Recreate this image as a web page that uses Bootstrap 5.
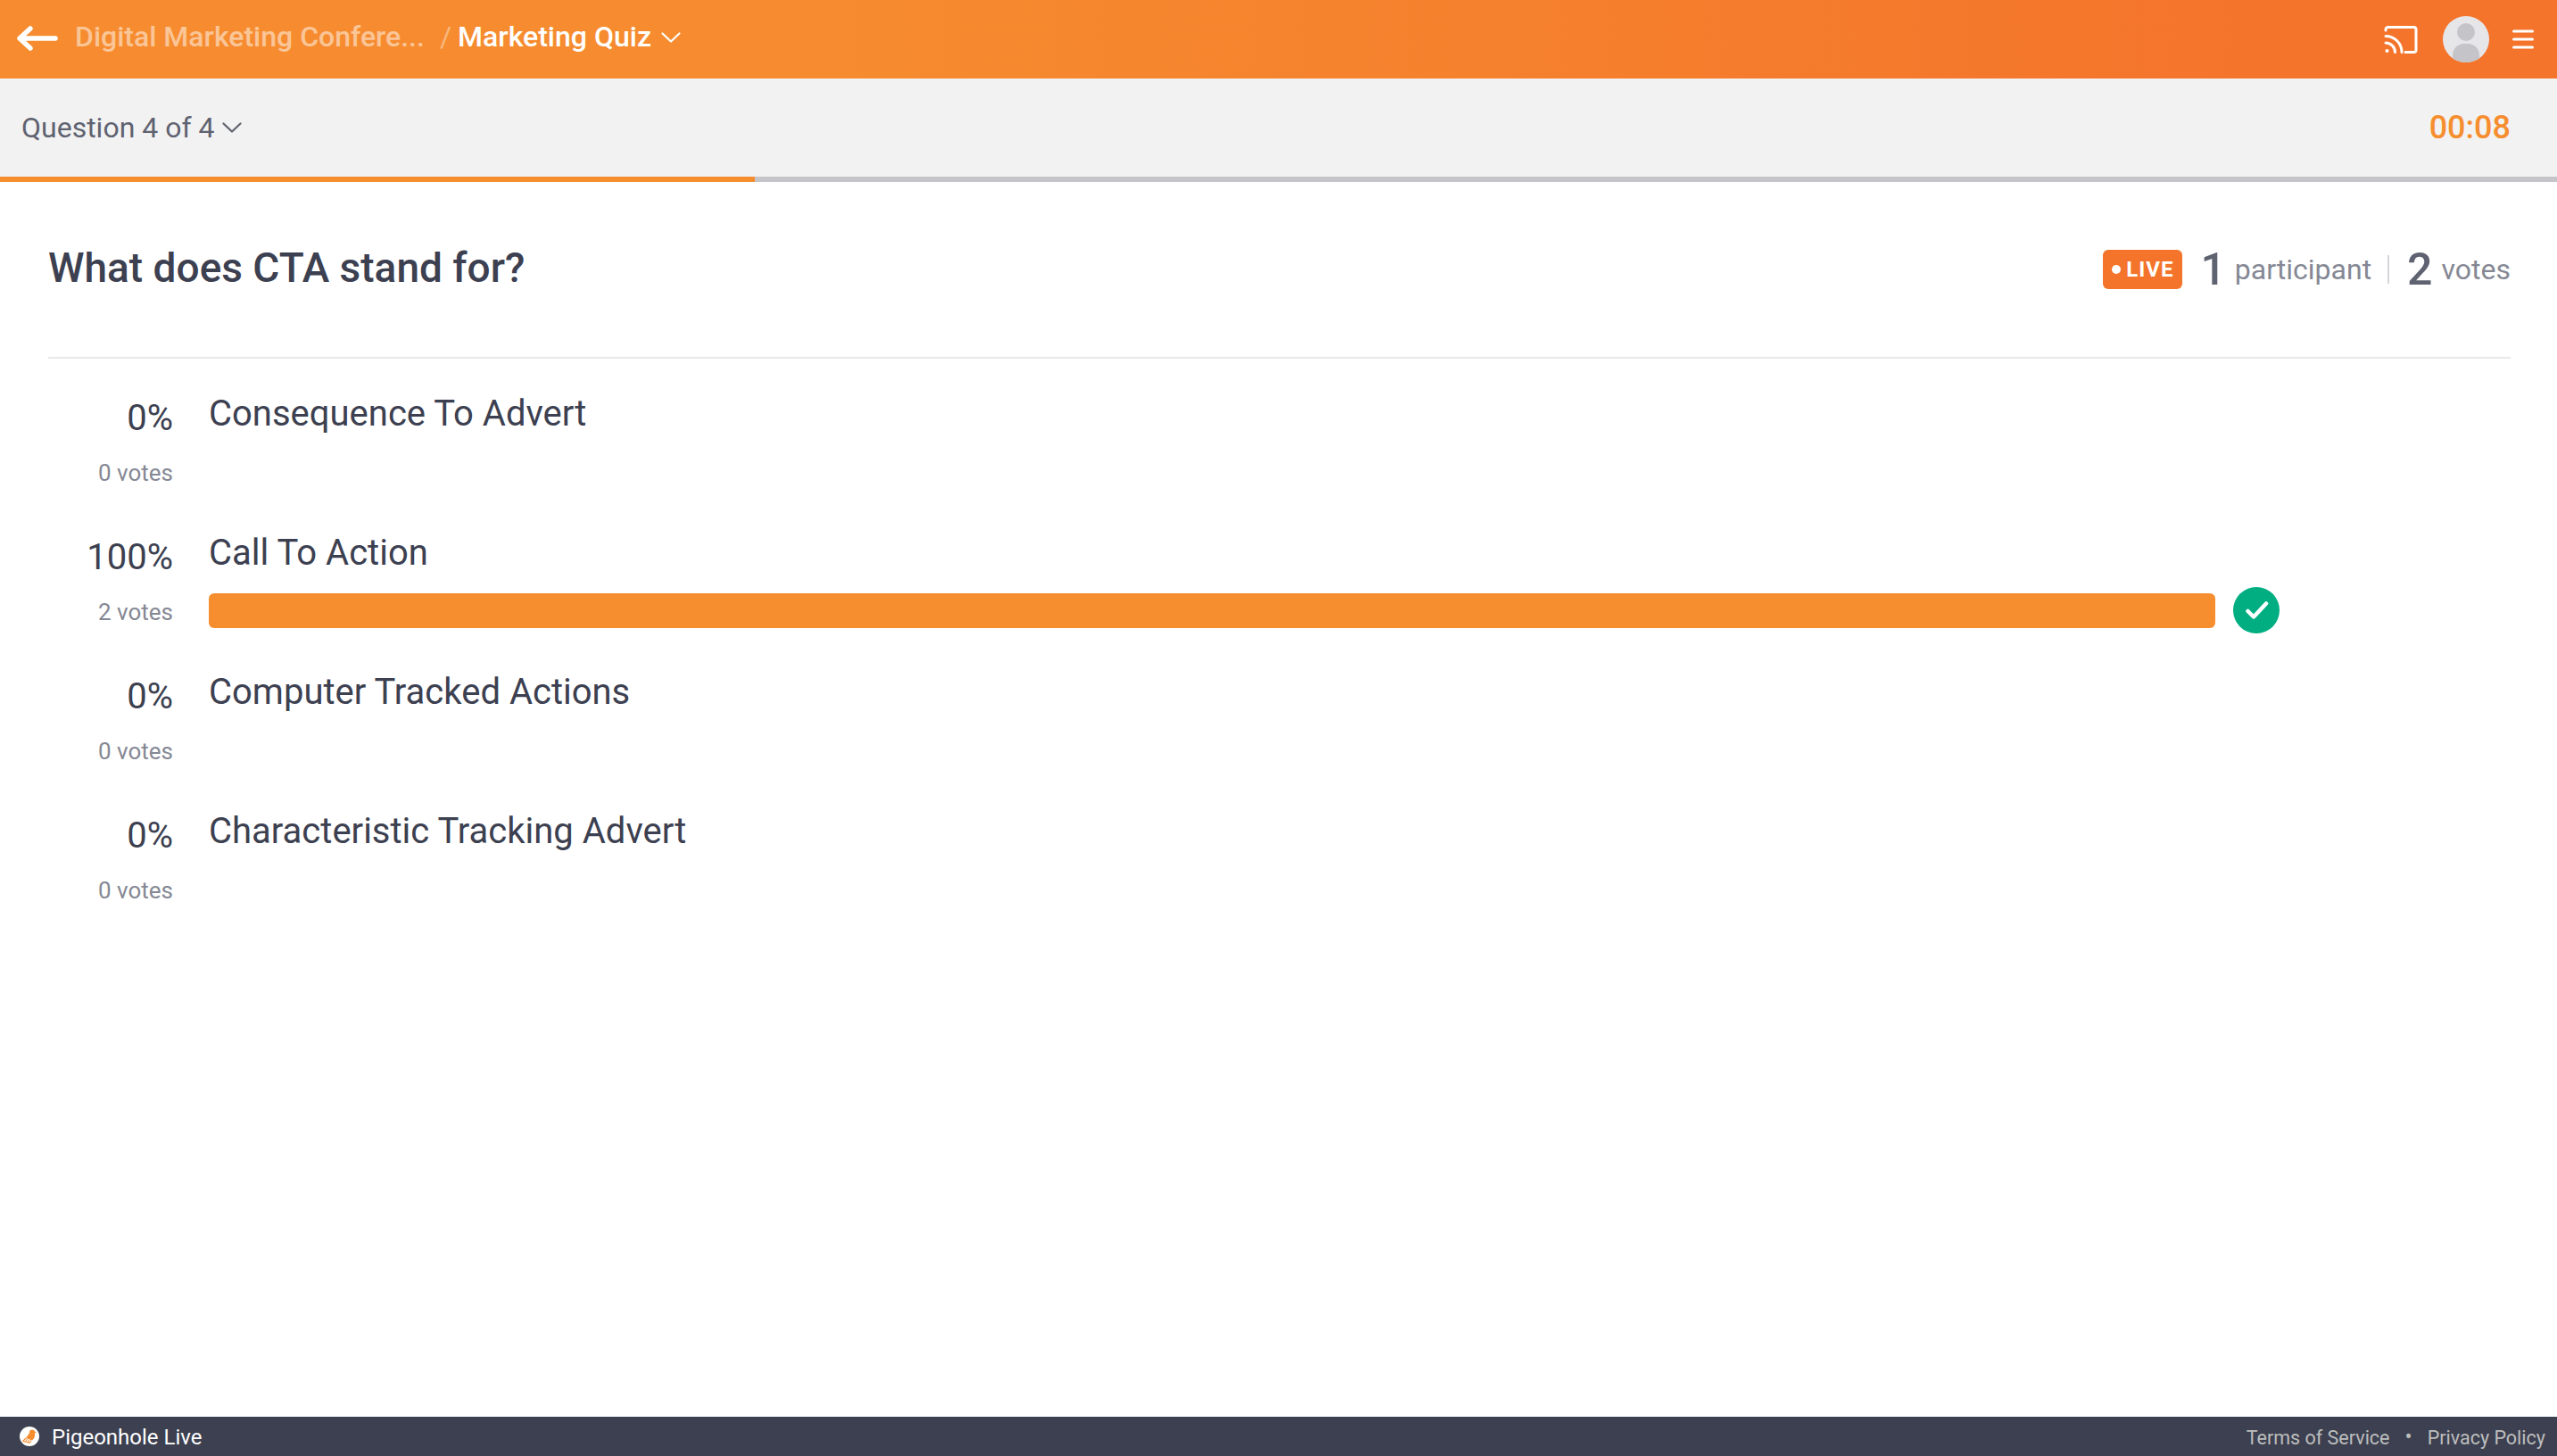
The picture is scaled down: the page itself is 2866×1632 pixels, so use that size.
<!DOCTYPE html>
<html lang="en">
<head>
<meta charset="utf-8">
<title>Marketing Quiz</title>
<link rel="stylesheet" href="https://cdn.jsdelivr.net/npm/bootstrap@5.3.0/dist/css/bootstrap.min.css">
<style>
html,body{height:100%;}
body{font-family:Roboto,"Liberation Sans",sans-serif;color:#3c4050;background:#fff;overflow:hidden;}
.pg-shell{height:1632px;}
.pg-top{height:88px;background:linear-gradient(90deg,#f68c2f 0%,#f68c2f 30%,#f4742b 88%,#f4742b 100%);padding:0 26px 0 19px;}
.pg-back{width:46px;height:28px;margin-right:19px;margin-bottom:2px;}
.pg-crumb{font-size:32px;font-weight:500;line-height:40px;color:#fff;margin-bottom:6px;}
.pg-crumb-dim{color:rgba(255,255,255,.5);}
.pg-sep{margin:0 7px 6px 17px;color:rgba(255,255,255,.4);font-weight:400;}
.pg-chev{width:22px;height:12px;margin-left:11px;margin-bottom:4px;}
.pg-cast{width:38px;height:31px;margin-right:28px;}
.pg-ava{width:52px;height:52px;margin-right:26px;}
.pg-menu{width:24px;height:22px;}
.pg-sub{height:110px;background:#f2f2f2;padding:0 52px 0 24px;}
.pg-qn{font-size:32px;line-height:40px;color:#5f6270;}
.pg-chev2{width:22px;height:12px;margin-left:9px;}
.pg-time{font-size:36px;font-weight:500;color:#f68e2f;line-height:40px;}
.pg-prog{height:6px;background:#c4c4c9;border-radius:0;}
.pg-prog .progress-bar{background:#f68e2f;}
.pg-main{padding:0 52px 0 54px;}
.pg-head{height:198px;border-bottom:2px solid #e8e8ea;}
.pg-title{font-size:46px;font-weight:500;line-height:1;color:#3c4050;margin:0 0 4px;}
.pg-stats{margin-bottom:1px;}
.pg-live{height:44px;width:89px;background:#f4742b;color:#fff;border-radius:6px;font-size:24px;font-weight:700;letter-spacing:1px;margin-right:20px;}
.pg-dot{width:10px;height:10px;border-radius:50%;background:#fff;margin-right:6px;}
.pg-num{font-size:50px;font-weight:500;color:#5f6270;line-height:1;margin-right:10px;}
.pg-word{font-size:32px;color:#858894;line-height:1;}
.pg-div{width:2px;height:32px;background:#d5d6da;margin:0 20px 0 18px;}
.pg-opts{padding-top:38px;}
.pg-opt{height:156px;}
.pg-left{width:140px;margin-right:40px;text-align:right;}
.pg-pct{font-size:40px;line-height:48px;color:#3c4050;padding-top:5px;}
.pg-vts{font-size:26px;line-height:32px;color:#858894;margin-top:21px;}
.pg-lab{font-size:40px;line-height:48px;color:#3c4050;}
.pg-barrow{margin-top:14px;}
.pg-bar{width:2249px;height:39px;background:#f68e2f;border-radius:6px;}
.pg-ok{width:52px;height:52px;margin-left:20px;}
.pg-foot{height:44px;background:#3c4050;padding:0 13px 0 22px;}
.pg-logo{width:22px;height:22px;margin-right:14px;}
.pg-brand{font-size:24px;color:#fff;line-height:30px;margin-top:2px;}
.pg-link{font-size:21.500px;color:#bdbdbd;line-height:30px;margin-top:4px;}
.pg-bul{margin:0 17px;color:#bdbdbd;font-size:24px;}
</style>
</head>
<body>
<div class="pg-shell d-flex flex-column">
  <nav class="pg-top d-flex align-items-center flex-shrink-0">
    <svg class="pg-back" viewBox="0 0 46 28" fill="none" stroke="#fff" stroke-width="5.500" stroke-linecap="round" stroke-linejoin="round"><path d="M43 14H3M15 3 3 14l12 11"/></svg>
    <span class="pg-crumb pg-crumb-dim">Digital Marketing Confere...</span>
    <span class="pg-crumb pg-sep">/</span>
    <span class="pg-crumb">Marketing Quiz</span>
    <svg class="pg-chev" viewBox="0 0 22 12" fill="none" stroke="#fff" stroke-width="2.200" stroke-linecap="round" stroke-linejoin="round"><path d="M1.500 1.500 11 10.500l9.500-9"/></svg>
    <div class="ms-auto d-flex align-items-center">
      <svg class="pg-cast" viewBox="0 0 38 31" fill="none" stroke="#fff" stroke-width="3" stroke-linecap="round"><path d="M2 5V4a2.500 2.500 0 0 1 2.500-2.500h29A2.500 2.500 0 0 1 36 4v23a2.500 2.500 0 0 1-2.500 2.500H24"/><path d="M2 11.500A18 18 0 0 1 20 29.500"/><path d="M2 19a10.500 10.500 0 0 1 10.500 10.500"/><circle cx="3.500" cy="28" r="2" fill="#fff" stroke="none"/></svg>
      <svg class="pg-ava" viewBox="0 0 52 52"><defs><clipPath id="pgc"><circle cx="26" cy="26" r="26"/></clipPath></defs><circle cx="26" cy="26" r="26" fill="#e6e6e9"/><circle cx="26" cy="18" r="10" fill="#c4c4c9"/><rect x="11" y="31" width="30" height="30" rx="13" fill="#c4c4c9" clip-path="url(#pgc)"/></svg>
      <svg class="pg-menu" viewBox="0 0 24 22" stroke="#fff" stroke-width="3" stroke-linecap="round"><path d="M1.500 2h21M1.500 11h21M1.500 20h21"/></svg>
    </div>
  </nav>
  <div class="pg-sub d-flex align-items-center justify-content-between flex-shrink-0">
    <div class="d-flex align-items-center">
      <span class="pg-qn">Question 4 of 4</span>
      <svg class="pg-chev2" viewBox="0 0 22 12" fill="none" stroke="#5f6270" stroke-width="2.200" stroke-linecap="round" stroke-linejoin="round"><path d="M1.500 1.500 11 10.500l9.500-9"/></svg>
    </div>
    <span class="pg-time">00:08</span>
  </div>
  <div class="progress pg-prog flex-shrink-0" role="progressbar" aria-valuenow="30" aria-valuemin="0" aria-valuemax="100">
    <div class="progress-bar" style="width:846px"></div>
  </div>
  <main class="pg-main flex-grow-1">
    <div class="pg-head d-flex align-items-center justify-content-between">
      <h1 class="pg-title">What does CTA stand for?</h1>
      <div class="pg-stats d-flex align-items-center">
        <span class="pg-live d-inline-flex align-items-center justify-content-center"><span class="pg-dot"></span>LIVE</span>
        <span class="pg-num">1</span><span class="pg-word">participant</span>
        <span class="pg-div"></span>
        <span class="pg-num">2</span><span class="pg-word">votes</span>
      </div>
    </div>
    <div class="pg-opts">
      <div class="pg-opt d-flex">
        <div class="pg-left"><div class="pg-pct">0%</div><div class="pg-vts">0 votes</div></div>
        <div class="flex-grow-1"><div class="pg-lab">Consequence To Advert</div></div>
      </div>
      <div class="pg-opt d-flex">
        <div class="pg-left"><div class="pg-pct">100%</div><div class="pg-vts">2 votes</div></div>
        <div class="flex-grow-1"><div class="pg-lab">Call To Action</div>
          <div class="pg-barrow d-flex align-items-center"><div class="pg-bar"></div>
            <svg class="pg-ok" viewBox="0 0 52 52"><circle cx="26" cy="26" r="26" fill="#00ae82"/><path d="M16.500 27l6.500 6.500L37 18.500" fill="none" stroke="#fff" stroke-width="4.500" stroke-linecap="round" stroke-linejoin="round"/></svg>
          </div>
        </div>
      </div>
      <div class="pg-opt d-flex">
        <div class="pg-left"><div class="pg-pct">0%</div><div class="pg-vts">0 votes</div></div>
        <div class="flex-grow-1"><div class="pg-lab">Computer Tracked Actions</div></div>
      </div>
      <div class="pg-opt d-flex">
        <div class="pg-left"><div class="pg-pct">0%</div><div class="pg-vts">0 votes</div></div>
        <div class="flex-grow-1"><div class="pg-lab">Characteristic Tracking Advert</div></div>
      </div>
    </div>
  </main>
  <footer class="pg-foot d-flex align-items-center flex-shrink-0">
    <svg class="pg-logo" viewBox="0 0 22 22"><circle cx="11" cy="11" r="11" fill="#fff"/><circle cx="14" cy="6.500" r="3" fill="#f68e2f"/><path d="M17 5.500l2 1-2.500 1z" fill="#f68e2f"/><path d="M11.500 6.500 7 13l7 2.500c2.500-2 3.500-5 3-8z" fill="#f68e2f"/><path d="M7 13l-3.500 3.500M8.500 14l-2.500 3.500M10.500 15l-1.500 3M12.500 15.500l-.5 2.500M4 16.500l8 2" fill="none" stroke="#f68e2f" stroke-width="1.100"/></svg>
    <span class="pg-brand">Pigeonhole Live</span>
    <div class="ms-auto d-flex align-items-center">
      <span class="pg-link">Terms of Service</span><span class="pg-bul">•</span><span class="pg-link">Privacy Policy</span>
    </div>
  </footer>
</div>
<script src="https://cdn.jsdelivr.net/npm/bootstrap@5.3.0/dist/js/bootstrap.bundle.min.js"></script>
</body>
</html>
